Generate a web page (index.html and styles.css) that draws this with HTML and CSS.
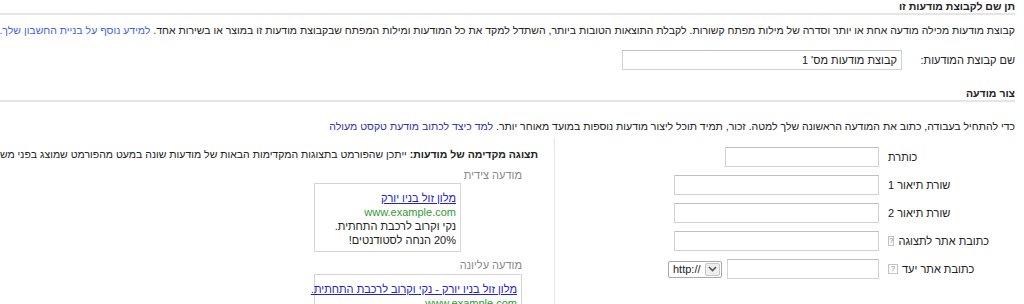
FILE: index.html
```html
<!DOCTYPE html>
<html lang="he" dir="rtl">
<head>
    <meta charset="UTF-8">
    <meta name="viewport" content="width=device-width, initial-scale=1.0">
    <title>יצירת קבוצת מודעות</title>
    <link rel="stylesheet" href="styles.css">
</head>
<body>
    <div class="page">
        <!-- Ad group name -->
        <div class="section">
            <h2 class="section-title">תן שם לקבוצת מודעות זו</h2>
            <p class="intro">קבוצת מודעות מכילה מודעה אחת או יותר וסדרה של מילות מפתח קשורות. לקבלת התוצאות הטובות ביותר, השתדל למקד את כל המודעות ומילות המפתח שבקבוצת מודעות זו במוצר או בשירות אחד. <a href="#" class="link">למידע נוסף על בניית החשבון שלך.</a></p>
            <div class="name-row">
                <label class="name-label" for="adGroupName">שם קבוצת המודעות:</label>
                <input type="text" id="adGroupName" class="text-input name-input" value="קבוצת מודעות מס' 1">
            </div>
        </div>

        <!-- Create ad -->
        <div class="section create-section">
            <h2 class="section-title">צור מודעה</h2>
            <p class="intro">כדי להתחיל בעבודה, כתוב את המודעה הראשונה שלך למטה. זכור, תמיד תוכל ליצור מודעות נוספות במועד מאוחר יותר. <a href="#" class="link link-dark">למד כיצד לכתוב מודעת טקסט מעולה</a></p>

            <div class="create-ad">
                <div class="ad-form">
                    <div class="form-row">
                        <div class="label-cell"><label for="headline">כותרת</label></div>
                        <input type="text" id="headline" class="text-input short">
                    </div>
                    <div class="form-row">
                        <div class="label-cell"><label for="desc1">שורת תיאור 1</label></div>
                        <input type="text" id="desc1" class="text-input wide">
                    </div>
                    <div class="form-row">
                        <div class="label-cell"><label for="desc2">שורת תיאור 2</label></div>
                        <input type="text" id="desc2" class="text-input wide">
                    </div>
                    <div class="form-row">
                        <div class="label-cell"><label for="displayUrl">כתובת אתר לתצוגה</label><span class="help">?</span></div>
                        <input type="text" id="displayUrl" class="text-input wide">
                    </div>
                    <div class="form-row">
                        <div class="label-cell"><label for="destUrl">כתובת אתר יעד</label><span class="help">?</span></div>
                        <input type="text" id="destUrl" class="text-input url">
                        <div class="select-box">
                            <select class="protocol">
                                <option>http://</option>
                                <option>https://</option>
                            </select>
                            <span class="select-arrow">
                                <svg width="9" height="6" viewBox="0 0 9 6"><path d="M1 1l3.5 3.5L8 1" fill="none" stroke="#555" stroke-width="1.6"/></svg>
                            </span>
                        </div>
                    </div>
                </div>

                <div class="ad-preview">
                    <div class="preview-title"><b>תצוגה מקדימה של מודעות:</b> ייתכן שהפורמט בתצוגות המקדימות הבאות של מודעות שונה במעט מהפורמט שמוצג בפני משתמשים בפועל.</div>
                    <div class="preview-list">
                        <div class="preview-label">מודעה צידית</div>
                        <div class="ad-box side-ad">
                            <a href="#" class="ad-title">מלון זול בניו יורק</a>
                            <div class="ad-url">www.example.com</div>
                            <div>נקי וקרוב לרכבת התחתית.</div>
                            <div>20% הנחה לסטודנטים!</div>
                        </div>
                        <div class="preview-label top-label">מודעה עליונה</div>
                        <div class="ad-box top-ad">
                            <a href="#" class="ad-title">מלון זול בניו יורק - נקי וקרוב לרכבת התחתית.</a>
                            <div class="ad-url">www.example.com</div>
                            <div>20% הנחה לסטודנטים!</div>
                        </div>
                    </div>
                </div>
            </div>
        </div>
    </div>
</body>
</html>
```

FILE: styles.css
```css
html, body {
    margin: 0;
    padding: 0;
    overflow: hidden;
}
body {
    font-family: "Liberation Sans", Arial, sans-serif;
    font-size: 11px;
    color: #222;
    background-color: #ffffff;
}
.page {
    padding-right: 9px;
    white-space: nowrap;
}
.section-title {
    margin: 0;
    font-size: 10.5px;
    font-weight: bold;
    line-height: 13px;
    color: #222;
    border-bottom: 2px solid #e5e5e5;
}
.create-section {
    margin-top: 17px;
}
.intro {
    margin: 8px 0 0;
    font-size: 10.5px;
    line-height: 14px;
    color: #222;
}
.create-section .intro {
    margin-top: 17px;
}
.link {
    color: #4466dd;
    text-decoration: none;
}
.link-dark {
    color: #3333aa;
}
.name-row {
    display: flex;
    align-items: center;
    gap: 6px;
    margin-top: 13px;
}
.name-label {
    width: 107px;
}
.text-input {
    box-sizing: border-box;
    height: 20px;
    margin: 0;
    border: 1px solid #d2d2d2;
    border-top-color: #c0c0c0;
    padding: 0 4px;
    font-family: inherit;
    font-size: 11px;
    color: #222;
    background-color: #fff;
}
.name-input {
    width: 280px;
}
.create-ad {
    display: flex;
    margin-top: 5px;
}
.ad-form {
    box-sizing: border-box;
    width: 461px;
    height: 170px;
    flex-shrink: 0;
    padding: 9px 27px 0 0;
    border-left: 1px solid #e5e5e5;
    display: flex;
    flex-direction: column;
    gap: 8px;
}
.form-row {
    display: flex;
    align-items: center;
    gap: 9px;
}
/* labels sit against the inputs (left side of the column) */
.label-cell {
    width: 100px;
    flex-shrink: 0;
    display: flex;
    align-items: center;
    justify-content: flex-end;
    gap: 4px;
    line-height: 14px;
}
.help {
    display: inline-block;
    box-sizing: border-box;
    width: 10px;
    height: 10px;
    border: 1px solid #c4c4c4;
    font-size: 8px;
    line-height: 8px;
    text-align: center;
    color: #888;
}
.short {
    width: 154px;
}
.wide {
    width: 205px;
}
.url {
    width: 152px;
}
.select-box {
    position: relative;
    width: 54px;
    height: 17px;
    margin-right: -4px;
}
.protocol {
    appearance: none;
    -webkit-appearance: none;
    box-sizing: border-box;
    width: 54px;
    height: 17px;
    margin: 0;
    padding: 0 0 0 4px;
    direction: ltr;
    text-align: left;
    border: 1px solid #a8a8a8;
    border-radius: 2px;
    background-color: #fff;
    font-family: inherit;
    font-size: 11px;
    color: #222;
}
.select-arrow {
    position: absolute;
    top: 2px;
    right: 2px;
    width: 15px;
    height: 13px;
    box-sizing: border-box;
    border: 1px solid #c8c8c8;
    border-radius: 2px;
    background-color: #eeeeee;
    display: flex;
    align-items: center;
    justify-content: center;
    pointer-events: none;
}
.ad-preview {
    flex: 1;
    padding: 9px 16px 0 0;
}
.preview-title {
    font-size: 10.5px;
    line-height: 14px;
    color: #222;
}
.preview-list {
    display: flex;
    flex-direction: column;
    align-items: flex-start;
    width: 208px;
    margin: 7px 16px 0 0;
}
.preview-label {
    color: #888;
    font-size: 11px;
    line-height: 14px;
}
.top-label {
    margin-top: 6px;
}
.ad-box {
    box-sizing: border-box;
    border: 1px solid #d4d4d4;
    padding: 7px 4px 4px 4px;
    font-size: 11px;
    line-height: 14px;
    color: #222;
    margin-top: 1px;
}
.side-ad {
    width: 147px;
    align-self: flex-end;
}
.top-ad {
    width: 208px;
    margin-top: 2px;
}
.ad-title {
    color: #2222cc;
    text-decoration: underline;
}
.ad-url {
    color: #339933;
}
```
